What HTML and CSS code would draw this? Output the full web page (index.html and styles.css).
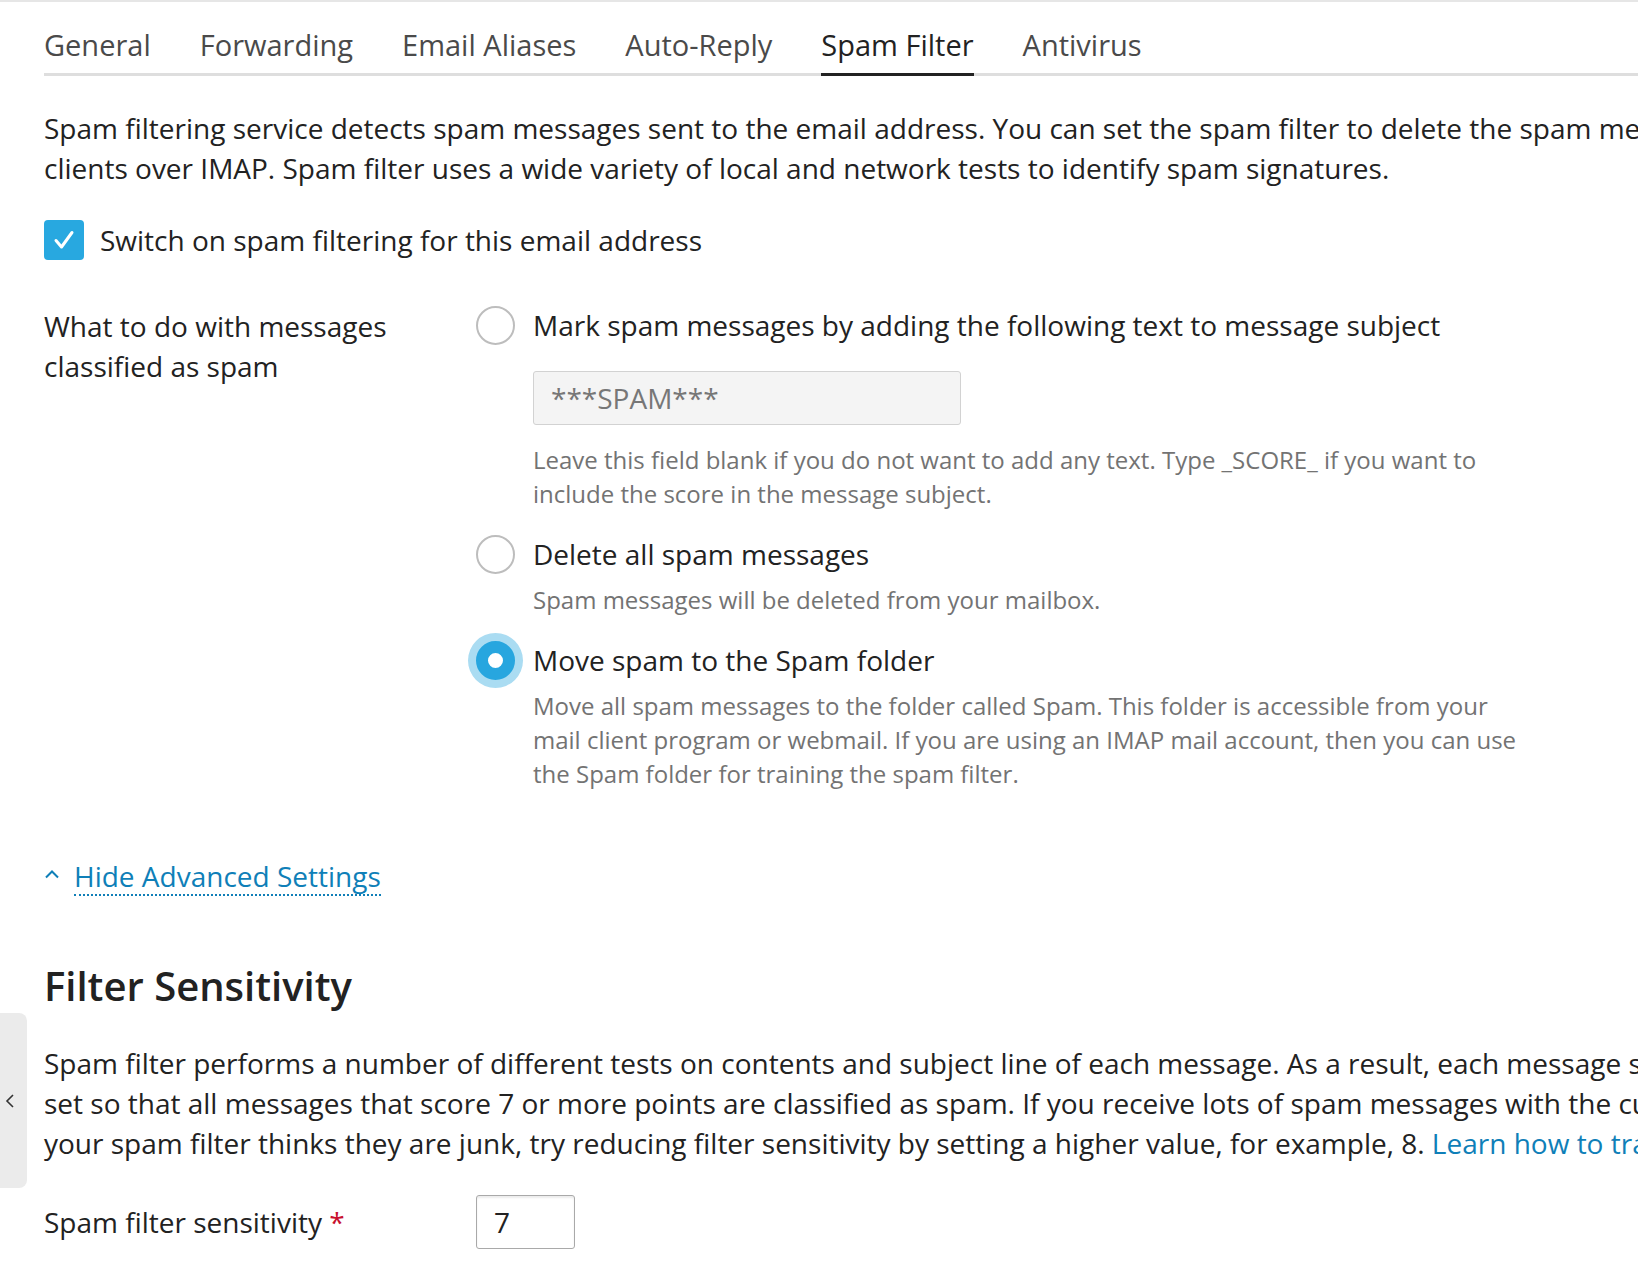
FILE: index.html
```html
<!DOCTYPE html>
<html lang="en">
<head>
    <meta charset="UTF-8">
    <title>Spam Filter</title>
    <link rel="stylesheet" href="styles.css">
</head>
<body>
    <div class="page">
        <div class="tabs">
            <div class="tab">General</div>
            <div class="tab">Forwarding</div>
            <div class="tab">Email Aliases</div>
            <div class="tab">Auto-Reply</div>
            <div class="tab active">Spam Filter</div>
            <div class="tab">Antivirus</div>
        </div>

        <p class="intro">Spam filtering service detects spam messages sent to the email address. You can set the spam filter to delete the spam messages or move them to the Spam folder, which can be accessed by email<br>clients over IMAP. Spam filter uses a wide variety of local and network tests to identify spam signatures.</p>

        <label class="checkbox-row">
            <span class="checkbox">
                <svg width="26" height="26" viewBox="0 0 26 26"><polyline points="5,13.5 10.5,20 21,5.5" fill="none" stroke="#fff" stroke-width="3" stroke-linecap="round" stroke-linejoin="round"/></svg>
            </span>
            Switch on spam filtering for this email address
        </label>

        <div class="form-row">
            <div class="field-label">What to do with messages<br>classified as spam</div>
            <div class="options">
                <div class="option">
                    <span class="radio"></span>
                    <div class="option-body">
                        <div class="option-label">Mark spam messages by adding the following text to message subject</div>
                        <input class="subject-input" type="text" value="***SPAM***" disabled>
                        <div class="hint hint-after-input">Leave this field blank if you do not want to add any text. Type _SCORE_ if you want to<br>include the score in the message subject.</div>
                    </div>
                </div>
                <div class="option">
                    <span class="radio"></span>
                    <div class="option-body">
                        <div class="option-label">Delete all spam messages</div>
                        <div class="hint">Spam messages will be deleted from your mailbox.</div>
                    </div>
                </div>
                <div class="option">
                    <span class="radio checked"></span>
                    <div class="option-body">
                        <div class="option-label">Move spam to the Spam folder</div>
                        <div class="hint">Move all spam messages to the folder called Spam. This folder is accessible from your<br>mail client program or webmail. If you are using an IMAP mail account, then you can use<br>the Spam folder for training the spam filter.</div>
                    </div>
                </div>
            </div>
        </div>

        <div class="advanced">
            <svg class="caret" width="16" height="10" viewBox="0 0 16 10"><polyline points="2,8.5 8,2.5 14,8.5" fill="none" stroke="#0f7fb8" stroke-width="2"/></svg>
            <a class="advanced-link">Hide Advanced Settings</a>
        </div>

        <h2 class="section-title">Filter Sensitivity</h2>

        <p class="intro">Spam filter performs a number of different tests on contents and subject line of each message. As a result, each message scores a number of points. The higher the number, the more likely a message is spam. By default, the filter sensitivity is<br>set so that all messages that score 7 or more points are classified as spam. If you receive lots of spam messages with the current settings, try increasing filter sensitivity by setting a lower value, for example, 6. If you are missing emails because<br>your spam filter thinks they are junk, try reducing filter sensitivity by setting a higher value, for example, 8. <a class="link">Learn how to train spam filter</a></p>

        <div class="form-row sensitivity-row">
            <div class="field-label">Spam filter sensitivity <span class="required">*</span></div>
            <div><input class="score-input" type="text" value="7"></div>
        </div>
    </div>

    <div class="side-toggle">
        <svg width="10" height="16" viewBox="0 0 10 16"><polyline points="8,2 2,8 8,14" fill="none" stroke="#333" stroke-width="1.6"/></svg>
    </div>
</body>
</html>
```

FILE: styles.css
```css
body {
    margin: 0;
    font-family: "Open Sans", "DejaVu Sans", sans-serif;
    color: #222;
    background: #fff;
    overflow: hidden;
}
.page {
    border-top: 2px solid #e6e6e6;
    padding-left: 44px;
    width: 2800px;
}
.tabs {
    display: flex;
    gap: 49px;
    padding-top: 23px;
    border-bottom: 3px solid #dedede;
}
.tab {
    font-size: 29px;
    line-height: 40px;
    padding-bottom: 8px;
    color: #4a4a4a;
}
.tab.active {
    color: #222;
    border-bottom: 3px solid #222;
    margin-bottom: -3px;
}
p {
    margin: 0;
}
.intro {
    font-size: 28px;
    line-height: 40px;
    margin-top: 32px;
    white-space: nowrap;
}
.checkbox-row {
    display: flex;
    align-items: center;
    gap: 16px;
    margin-top: 32px;
    font-size: 28px;
    line-height: 40px;
}
.checkbox {
    width: 40px;
    height: 40px;
    border-radius: 4px;
    background: #28a8e0;
    display: flex;
    align-items: center;
    justify-content: center;
}
.form-row {
    display: grid;
    grid-template-columns: 432px 1fr;
    margin-top: 46px;
}
.field-label {
    font-size: 28px;
    line-height: 40px;
}
.option {
    display: grid;
    grid-template-columns: 39px 1fr;
    column-gap: 18px;
    margin-bottom: 24px;
}
.radio {
    width: 39px;
    height: 39px;
    box-sizing: border-box;
    border: 2px solid #bdbdbd;
    border-radius: 50%;
    background: #fff;
}
.radio.checked {
    border: 12px solid #27a6df;
    box-shadow: 0 0 0 8px #aadcf2;
}
.option-label {
    font-size: 28px;
    line-height: 39px;
}
.subject-input {
    display: block;
    margin-top: 26px;
    width: 428px;
    height: 54px;
    box-sizing: border-box;
    padding: 0 17px;
    font-family: inherit;
    font-size: 28px;
    color: #777;
    background: #f4f4f4;
    border: 1px solid #d2d2d2;
    border-radius: 3px;
}
.hint {
    font-size: 24px;
    line-height: 34px;
    color: #737373;
    margin-top: 9px;
    white-space: nowrap;
}
.hint-after-input {
    margin-top: 18px;
}
.advanced {
    display: flex;
    align-items: center;
    gap: 14px;
    margin-top: 43px;
    font-size: 28px;
}
.caret {
    margin-top: -6px;
}
.advanced-link {
    color: #0f7fb8;
    line-height: 36px;
    border-bottom: 2px dotted #0f7fb8;
}
.section-title {
    font-size: 40px;
    font-weight: 600;
    line-height: 48px;
    margin: 66px 0 0;
}
.section-title + .intro {
    margin-top: 33px;
}
.link {
    color: #0f7fb8;
}
.sensitivity-row {
    margin-top: 32px;
    align-items: center;
}
.required {
    color: #c8102e;
}
.score-input {
    width: 99px;
    height: 54px;
    box-sizing: border-box;
    padding: 0 17px;
    font-family: inherit;
    font-size: 28px;
    color: #222;
    border: 1px solid #a9a9a9;
    border-radius: 3px;
    box-shadow: inset 0 2px 2px rgba(0, 0, 0, 0.08);
}
.side-toggle {
    position: absolute;
    left: 0;
    top: 1013px;
    width: 27px;
    height: 175px;
    background: #ebebeb;
    border-radius: 0 8px 8px 0;
    display: flex;
    align-items: center;
    padding-left: 5px;
    box-sizing: border-box;
}
```
